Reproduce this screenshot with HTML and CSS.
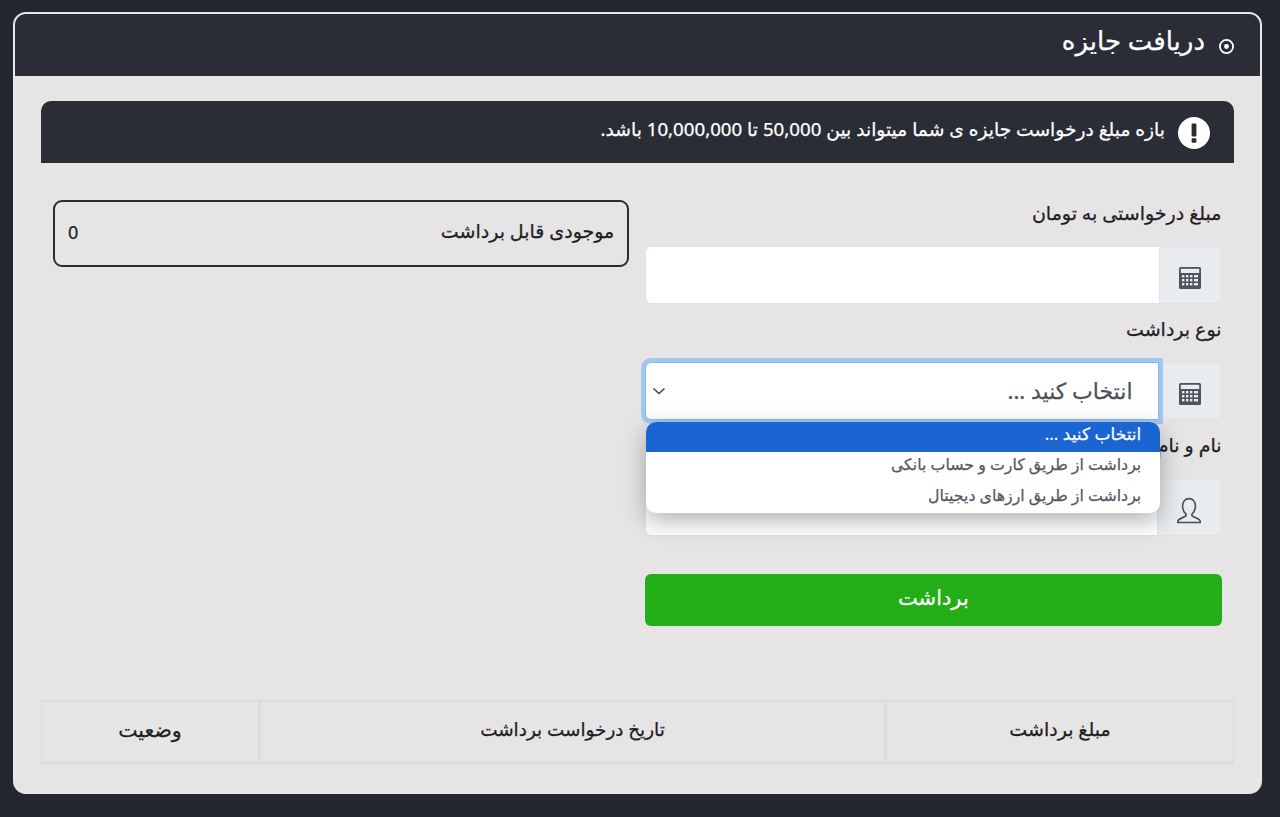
FILE: index.html
```html
<!DOCTYPE html>
<html lang="fa" dir="rtl">
<head>
<meta charset="utf-8">
<title>دریافت جایزه</title>
<link rel="stylesheet" href="styles.css">
</head>
<body>
<main class="card">
  <header class="card-head">
    <svg class="head-icon" viewBox="0 0 16 16" width="16" height="16"><circle cx="8" cy="8" r="6.2" fill="none" stroke="#fff" stroke-width="1.7"/><circle cx="8" cy="8" r="2.3" fill="#fff"/></svg>
    <h1>دریافت جایزه</h1>
  </header>
  <div class="card-body">
    <div class="alert">
      <svg class="alert-icon" viewBox="0 0 32 32" width="32" height="32"><circle cx="16" cy="16" r="16" fill="#fff"/><rect x="13.6" y="6.5" width="4.8" height="13" rx="1" fill="#2a2d36"/><rect x="13.6" y="21.3" width="4.8" height="4.4" rx="1" fill="#2a2d36"/></svg>
      <p>بازه مبلغ درخواست جایزه ی شما میتواند بین 50,000 تا 10,000,000 باشد.</p>
    </div>
    <div class="columns">
      <form class="form-col">
        <label class="label">مبلغ درخواستی به تومان</label>
        <div class="group">
          <span class="addon"><svg class="calc-icon" viewBox="0 0 24 24"><use href="#calc"/></svg></span>
          <span class="field"></span>
        </div>
        <label class="label">نوع برداشت</label>
        <div class="group select-group">
          <span class="addon"><svg class="calc-icon" viewBox="0 0 24 24"><use href="#calc"/></svg></span>
          <span class="field focused">
            <span class="select-text">انتخاب کنید ...</span>
            <svg class="chevron" viewBox="0 0 16 16" width="16" height="16"><path d="M2.5 5.5 8 10.5l5.5-5" fill="none" stroke="#444" stroke-width="1.5"/></svg>
          </span>
          <ul class="menu">
            <li class="active">انتخاب کنید ...</li>
            <li>برداشت از طریق کارت و حساب بانکی</li>
            <li>برداشت از طریق ارزهای دیجیتال</li>
          </ul>
        </div>
        <label class="label">نام و نام خانوادگی</label>
        <div class="group">
          <span class="addon addon-wide"><svg class="user-icon" viewBox="3 2 18 20" preserveAspectRatio="none"><path d="M12 3.2c-3 0-4.800 2.300-4.800 5.300 0 2.500 1 4.400 2.400 5.600.5.500.3 1.400-.4 1.700l-4.200 2c-1 .5-1.500 1.300-1.500 2.400h17c0-1.100-.5-1.900-1.500-2.400l-4.200-2c-.7-.3-.9-1.200-.4-1.700 1.400-1.200 2.400-3.100 2.400-5.600 0-3-1.800-5.300-4.800-5.300Z" fill="none" stroke="#4a4f57" stroke-width="1.200"/></svg></span>
          <span class="field"></span>
        </div>
        <button class="submit" type="button">برداشت</button>
      </form>
      <aside class="side-col">
        <div class="balance">
          <span class="balance-label">موجودی قابل برداشت</span>
          <span class="balance-value">0</span>
        </div>
      </aside>
    </div>
    <table class="history">
      <thead>
        <tr>
          <th class="c-amount">مبلغ برداشت</th>
          <th class="c-date">تاریخ درخواست برداشت</th>
          <th class="c-status">وضعیت</th>
        </tr>
      </thead>
    </table>
  </div>
</main>
<svg class="defs" width="0" height="0" aria-hidden="true">
  <symbol id="calc" viewBox="0 0 24 24" preserveAspectRatio="none">
    <rect x="1" y="1" width="22" height="22" rx="1.500" fill="#4f535a"/>
    <rect x="2.800" y="2.800" width="18.400" height="4.200" fill="#e9ecef"/>
    <g fill="#e9ecef">
      <rect x="4" y="9" width="2.400" height="2.400"/><rect x="8" y="9" width="2.400" height="2.400"/><rect x="12" y="9" width="2.400" height="2.400"/><rect x="16" y="9" width="4" height="2.400"/>
      <rect x="4" y="13" width="2.400" height="2.400"/><rect x="8" y="13" width="2.400" height="2.400"/><rect x="12" y="13" width="2.400" height="2.400"/><rect x="16" y="13" width="4" height="2.400"/>
      <rect x="4" y="17" width="2.400" height="2.400"/><rect x="8" y="17" width="2.400" height="2.400"/><rect x="12" y="17" width="2.400" height="2.400"/><rect x="16" y="17" width="4" height="2.400"/>
    </g>
  </symbol>
</svg>
</body>
</html>
```
FILE: styles.css
```css
* { box-sizing: border-box; }
html, body { height: 100%; }
body {
  margin: 0;
  padding: 12px 18px 23px 13px;
  background: #24272f;
  font-family: "Noto Sans", "DejaVu Sans", "Liberation Sans", sans-serif;
  color: #1c1e24;
  overflow: hidden;
  -webkit-text-stroke: 0.25px currentColor;
}
.defs { position: absolute; }
.card {
  height: 782px;
  background: #e6e4e5;
  border: 2px solid #e9e9ea;
  border-bottom-width: 1px;
  border-radius: 13px;
  overflow: hidden;
}
.card-head {
  height: 62px;
  background: #2a2d36;
  color: #fff;
  display: flex;
  align-items: center;
  gap: 13px;
  padding: 0 25px 0 0;
}
.head-icon { margin-top: 2px; width: 17px; height: 17px; }
.card-head h1 { margin: 0 0 10px; font-size: 26px; font-weight: 400; line-height: 32px; }
.card-body { padding: 25px 26px 0; }
.alert {
  height: 62px;
  background: #2a2d36;
  color: #fff;
  border-radius: 10px 10px 0 0;
  display: flex;
  align-items: center;
  gap: 13px;
  padding: 0 24px 0 0;
}
.alert-icon { flex: none; margin-top: 1px; }
.alert p { margin: 0 0 6px; font-size: 18.700px; line-height: 22px; }
.columns {
  display: flex;
  gap: 16px;
  padding: 37px 12.500px 0 12px;
  height: 537px;
}
.form-col, .side-col { flex: 1 1 0; min-width: 0; }
.label { display: block; font-size: 19px; line-height: 26px; height: 46px; color: #1f2026; }
.group { display: flex; height: 58px; margin-bottom: 12px; position: relative; }
.addon {
  flex: none;
  width: 63px;
  background: #e9ecef;
  border: 1px solid #dee2e6;
  border-radius: 0 6px 6px 0;
  display: flex;
  align-items: center;
  justify-content: center;
}
.addon-wide { width: 65px; }
.calc-icon { width: 24px; height: 26px; margin-top: 5px; }
.user-icon { width: 24px; height: 28px; margin-top: 7px; }
.field {
  flex: 1;
  background: #fff;
  border: 1px solid #dee2e6;
  border-right: 0;
  border-radius: 6px 0 0 6px;
  display: flex;
  align-items: center;
  justify-content: space-between;
}
.field.focused {
  border: 1px solid #86b7fe;
  box-shadow: 0 0 0 4px #a3c8ef;
  position: relative;
  z-index: 1;
}
.select-text { font-size: 22px; color: #4d5158; padding-right: 25px; margin-bottom: 3px; }
.chevron { margin-left: 5px; }
.menu {
  position: absolute;
  z-index: 3;
  top: 60px;
  left: 1px;
  width: 514px;
  margin: 0;
  padding: 0;
  list-style: none;
  background: #fff;
  border-radius: 10px;
  overflow: hidden;
  box-shadow: 0 8px 24px rgba(0, 0, 0, .3);
}
.menu li {
  height: 30.300px;
  line-height: 24px;
  padding: 0 19px;
  font-size: 15.800px;
  color: #55585e;
}
.menu li.active { background: #1a65d2; color: #fff; font-size: 17px; line-height: 23px; }
.submit {
  display: block;
  width: 100%;
  height: 52px;
  margin-top: 38px;
  padding: 0 0 6px;
  border: 0;
  border-radius: 6px;
  background: #23ad17;
  color: #fff;
  font: inherit;
  font-size: 21px;
}
.balance {
  height: 67px;
  border: 2px solid #2a2d36;
  border-radius: 9px;
  display: flex;
  justify-content: space-between;
  align-items: center;
  padding: 0 13px 6px;
  font-size: 19px;
}
.balance-value { font-size: 18px; margin-top: 3px; }
.history {
  width: 1193px;
  height: 65px;
  border-collapse: separate;
  border-spacing: 0;
  table-layout: fixed;
}
.history th {
  font-weight: 400;
  font-size: 19px;
  color: #1c1e24;
  border: 2px solid #dddbdc;
  border-left-width: 1px;
  border-right-width: 1px;
  border-bottom-width: 4px;
  padding: 0 0 6px;
}
.history th.c-date { font-size: 18.400px; border-left-width: 2px; border-right-width: 2px; }
.history th.c-status { font-size: 20.500px; }
.c-amount { width: 348px; }
.c-date { width: 627px; }
.c-status { width: 218px; }
```
